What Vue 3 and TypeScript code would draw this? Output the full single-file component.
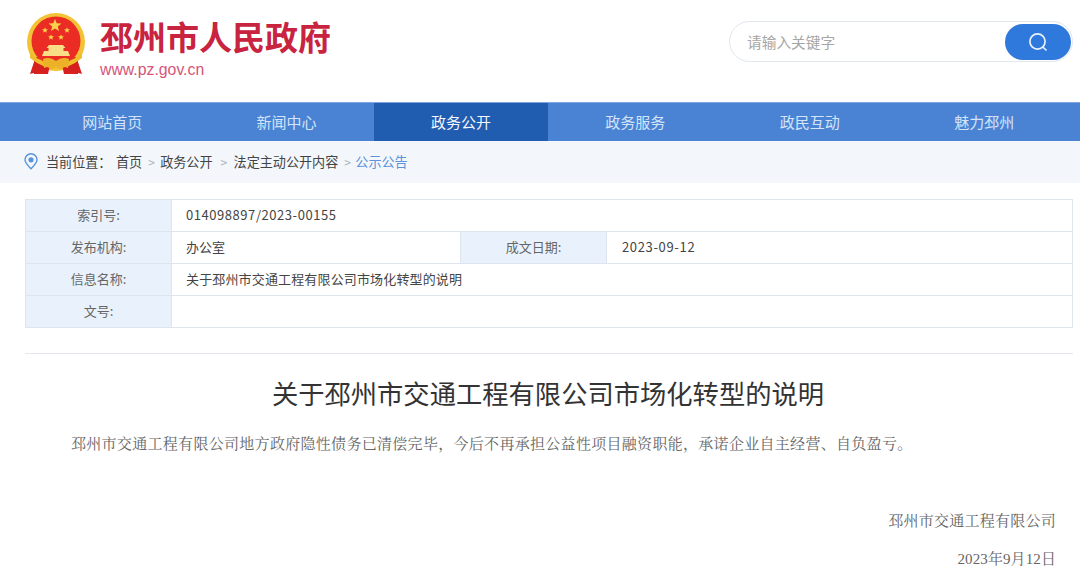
<script setup lang="ts">
const navItems: string[] = ['网站首页', '新闻中心', '政务公开', '政务服务', '政民互动', '魅力邳州']
</script>

<template>
  <div class="page">
    <header class="top">
      <div class="brand">
        <svg class="emblem" width="64" height="66" viewBox="0 0 64 66">
          <circle cx="32" cy="29" r="29" fill="#f3c235" />
          <circle cx="32" cy="28" r="24.5" fill="#ea2c25" />
          <path d="M10 45 L14 44 L24 58 L24 61 L10 61 Z M54 45 L50 44 L40 58 L40 61 L54 61 Z" fill="#d9231f" />
          <path d="M11 46 L6 61 L17 58 L24 61 L26 52 Z M53 46 L58 61 L47 58 L40 61 L38 52 Z" fill="#d5201f" />
          <path d="M6 40 Q32 62 58 40 L58 45 Q32 66 6 45 Z" fill="#f1bd2d" />
          <path d="M19 46 Q26 43 32 48 Q38 43 45 46 L44 55 Q38 52 36 57 L32 53 L28 57 Q26 52 20 55 Z" fill="#edb128" />
          <path d="M31 6 L32.7 10.3 L37.4 10.5 L33.8 13.4 L35 18 L31 15.5 L27 18 L28.2 13.4 L24.6 10.5 L29.3 10.3 Z" fill="#f8d24a" />
          <path d="M21 14.2 L21.8 16.2 L24 16.3 L22.3 17.7 L22.9 19.8 L21 18.6 L19.1 19.8 L19.7 17.7 L18 16.3 L20.2 16.2 Z" fill="#f8d24a" />
          <path d="M43 14.2 L43.8 16.2 L46 16.3 L44.3 17.7 L44.9 19.8 L43 18.6 L41.1 19.8 L41.7 17.7 L40 16.3 L42.2 16.2 Z" fill="#f8d24a" />
          <path d="M27 21.2 L27.8 23.2 L30 23.3 L28.3 24.7 L28.9 26.8 L27 25.6 L25.1 26.8 L25.7 24.7 L24 23.3 L26.2 23.2 Z" fill="#f8d24a" />
          <path d="M37 21.2 L37.8 23.2 L40 23.3 L38.3 24.7 L38.9 26.8 L37 25.6 L35.1 26.8 L35.7 24.7 L34 23.3 L36.2 23.2 Z" fill="#f8d24a" />
          <path d="M25 32 L39 32 L41.5 35 L39.5 35 L39.5 38 L44 38 L46 43 L18 43 L20 38 L24.5 38 L24.5 35 L22.5 35 Z" fill="#f8dc86" />
        </svg>
        <div class="brand-text">
          <h1 class="site-name">邳州市人民政府</h1>
          <div class="site-url">www.pz.gov.cn</div>
        </div>
      </div>
      <div class="search">
        <span class="placeholder">请输入关键字</span>
        <button class="search-btn" type="button" aria-label="搜索">
          <svg width="20" height="20" viewBox="0 0 20 20" fill="none" stroke="#e8f1fd" stroke-width="1.7">
            <circle cx="9.5" cy="9.5" r="7.6" />
            <path d="M14.8 15 L18 18" stroke-linecap="round" />
          </svg>
        </button>
      </div>
    </header>

    <nav class="nav">
      <a v-for="item in navItems" :key="item" class="nav-item" :class="{ active: item === '政务公开' }">{{ item }}</a>
    </nav>

    <div class="crumbs">
      <svg class="pin" width="14" height="17" viewBox="0 0 14 17" fill="none">
        <path d="M7 15.8 C4 12.6 1 10 1 6.8 A6 6 0 0 1 13 6.8 C13 10 10 12.6 7 15.8 Z" stroke="#5a93dc" stroke-width="1.4" />
        <circle cx="7" cy="6.8" r="2.6" fill="#5a93dc" />
      </svg>
      <span class="c-label">当前位置：</span>
      <span class="c-home">首页</span>
      <span class="c-sep">&gt;</span>
      <span>政务公开</span>
      <span class="c-sep wide">&gt;</span>
      <span>法定主动公开内容</span>
      <span class="c-sep">&gt;</span>
      <span class="c-now">公示公告</span>
    </div>

    <section class="meta">
      <div class="cell label">索引号:</div>
      <div class="cell value span3 num">014098897/2023-00155</div>
      <div class="cell label">发布机构:</div>
      <div class="cell value">办公室</div>
      <div class="cell label">成文日期:</div>
      <div class="cell value num date-val">2023-09-12</div>
      <div class="cell label">信息名称:</div>
      <div class="cell value span3 long">关于邳州市交通工程有限公司市场化转型的说明</div>
      <div class="cell label">文号:</div>
      <div class="cell value span3"></div>
    </section>

    <hr class="rule" />

    <article class="article">
      <h2 class="title">关于邳州市交通工程有限公司市场化转型的说明</h2>
      <p class="body">邳州市交通工程有限公司地方政府隐性债务已清偿完毕，今后不再承担公益性项目融资职能，承诺企业自主经营、自负盈亏。</p>
      <p class="sign">邳州市交通工程有限公司</p>
      <p class="date">2023年9月12日</p>
    </article>
  </div>
</template>

<style>
html, body { margin: 0; background: #fff; overflow: hidden; }
</style>

<style scoped>
.page {
  width: 1080px;
  height: 575px;
  overflow: hidden;
  font-family: "Noto Sans CJK SC", "Noto Sans", sans-serif;
  color: #333;
}
.top {
  height: 102px;
  box-sizing: border-box;
  display: flex;
  justify-content: space-between;
  padding: 21px 7px 0 24px;
}
.brand { display: flex; align-items: flex-start; }
.emblem { margin-top: -8px; flex: none; }
.brand-text { margin: -2px 0 0 12px; }
.site-name {
  margin: 0;
  font-size: 33px;
  line-height: 34px;
  font-weight: 700;
  color: #c8233f;
}
.site-url {
  margin-top: 7px;
  font: 15.8px/20px "Liberation Sans", Arial, sans-serif;
  color: #d65478;
}
.search {
  width: 344px;
  height: 41px;
  box-sizing: border-box;
  border: 1px solid #e0e7ef;
  border-radius: 21px;
  display: flex;
  align-items: center;
  justify-content: space-between;
  padding: 0 1px 0 18px;
}
.placeholder { font-size: 14.7px; color: #a6a6a6; margin-left: -1px; }
.search-btn {
  width: 66px;
  height: 36px;
  border: 0;
  padding: 0;
  border-radius: 18px;
  background: #2f78dc;
  display: flex;
  align-items: center;
  justify-content: center;
}
.nav {
  height: 39px;
  display: flex;
  padding-left: 25px;
  background: #4a83d4;
  border-top: 1px solid #7ea5df;
  box-sizing: border-box;
}
.nav-item {
  width: 174.4px;
  display: flex;
  align-items: center;
  justify-content: center;
  padding-bottom: 2px;
  box-sizing: border-box;
  font-size: 15px;
  color: #d5e3f7;
}
.nav-item.active { background: #205cb0; color: #f4f7fc; }
.crumbs {
  height: 42px;
  box-sizing: border-box;
  padding: 0 0 2px 24px;
  display: flex;
  align-items: center;
  background: #f3f7fc;
  font-size: 13.1px;
  color: #444;
}
.pin { margin-right: 8px; flex: none; margin-top: 1px; }
.c-label { width: 70px; }
.c-sep { color: #aab1ba; font-size: 12px; margin: 0 6px; width: 6px; }
.c-sep.wide { margin: 0 7px 0 8px; }
.c-now { color: #5e92da; margin-left: -1px; }
.meta {
  margin: 16px 7px 0 25px;
  display: grid;
  grid-template-columns: 146px 289px 146px 1fr;
  grid-auto-rows: 32px;
  border-top: 1px solid #dfe5ec;
  border-left: 1px solid #dfe5ec;
  font-size: 13px;
}
.cell {
  border-right: 1px solid #dfe5ec;
  border-bottom: 1px solid #dfe5ec;
  box-sizing: border-box;
  display: flex;
  align-items: center;
  padding-bottom: 2px;
}
.label { justify-content: center; background: #e9f2fc; color: #666; }
.value { padding-left: 14px; color: #444; }
.num { letter-spacing: 0.55px; }
.date-val { padding-left: 15px; letter-spacing: 0.65px; }
.long { letter-spacing: 0.15px; }
.span3 { grid-column: span 3; }
.rule {
  margin: 25px 7px 0 25px;
  border: 0;
  border-top: 1px solid #e4e8ed;
}
.article { font-family: "Liberation Serif", "Noto Serif CJK SC", "Noto Sans CJK SC", serif; }
.title {
  margin: 19px 9px 0 25px;
  text-align: center;
  font: 400 26.3px/40px "Noto Sans CJK SC", sans-serif;
  color: #333;
}
.body {
  margin: 21px 0 0 71px;
  font-size: 15px;
  line-height: 20px;
  letter-spacing: 0.3px;
  color: #666;
}
.sign, .date {
  margin: 0;
  padding-right: 24px;
  text-align: right;
  font-size: 15px;
  line-height: 20px;
  color: #666;
}
.sign { margin-top: 57px; letter-spacing: 0.25px; }
.date { margin-top: 18px; letter-spacing: 0.1px; }
</style>
